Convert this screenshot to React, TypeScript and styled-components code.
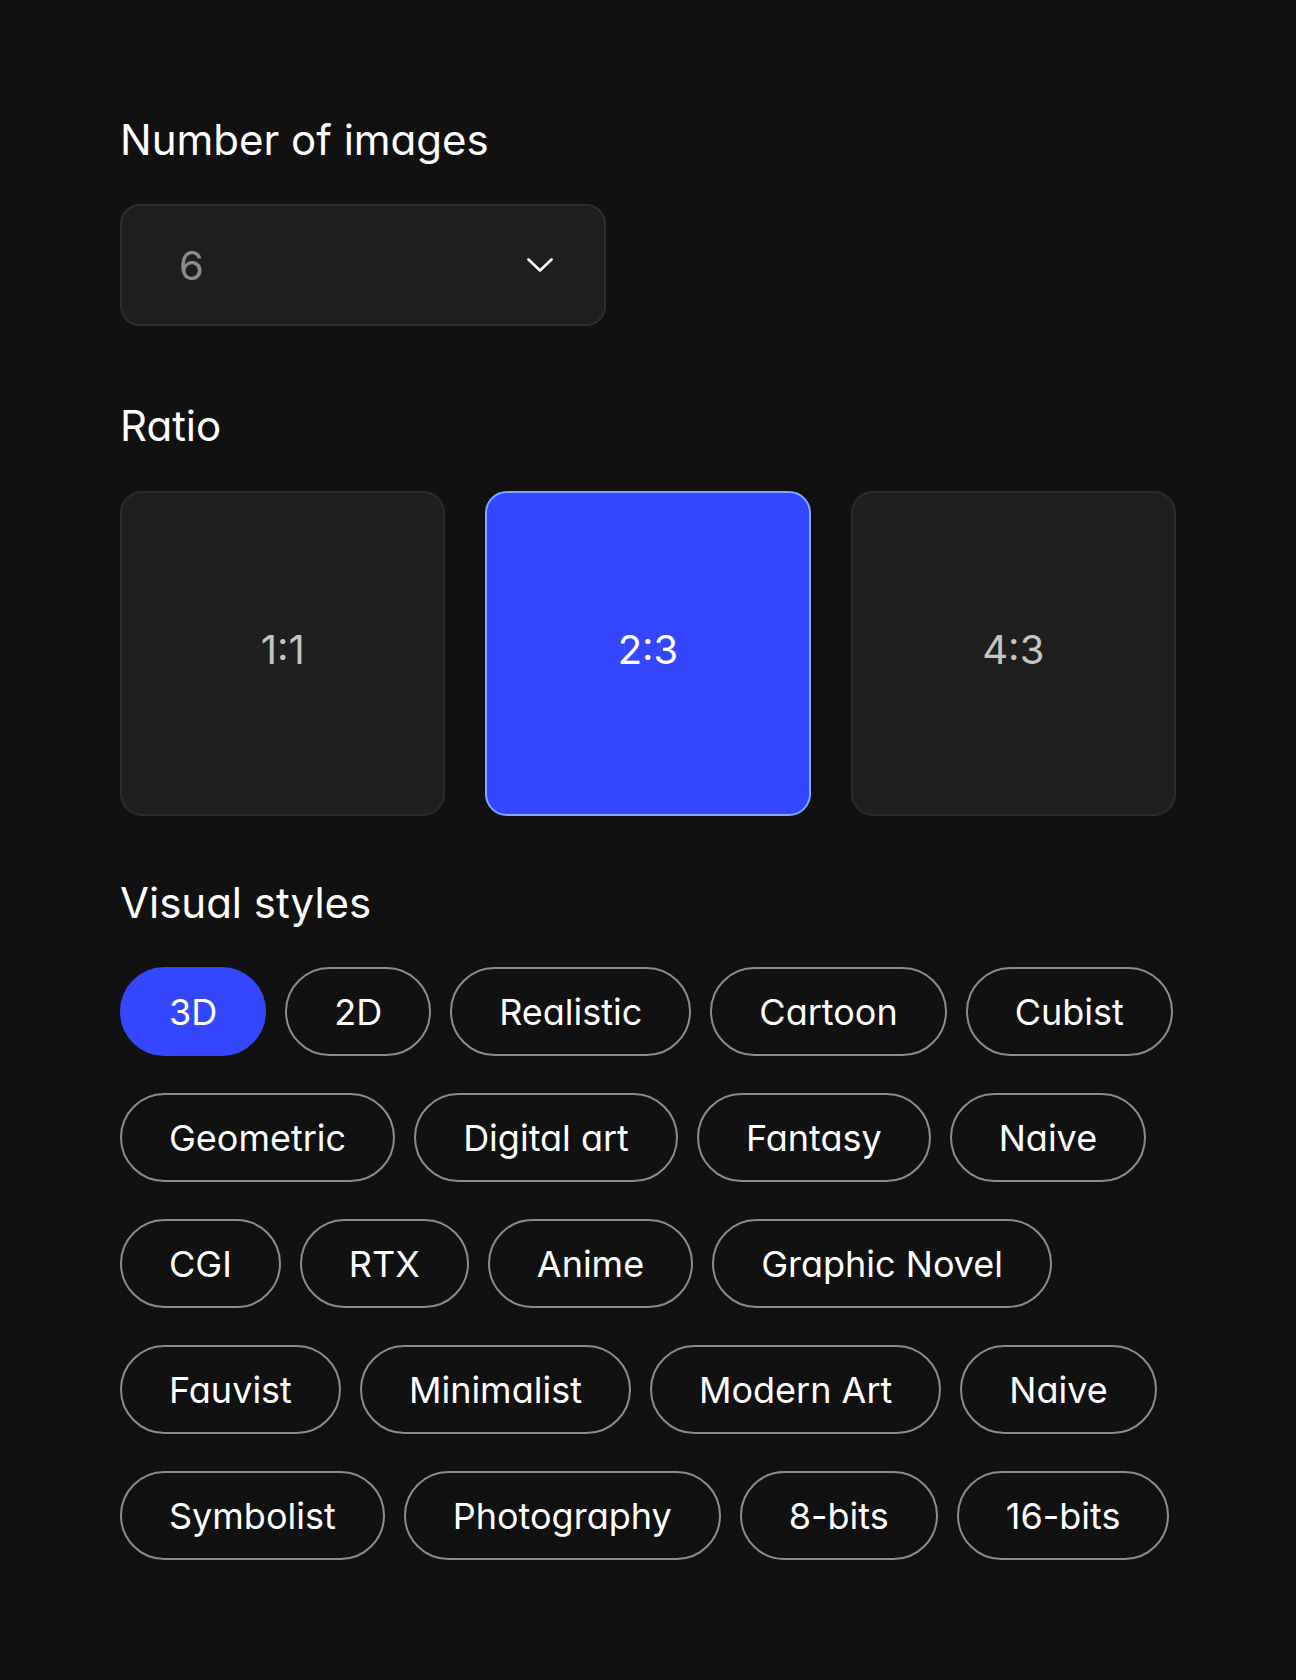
import styled, { createGlobalStyle } from 'styled-components'

const GlobalStyle = createGlobalStyle`
  body {
    margin: 0;
    background-color: #111111;
    font-family: Inter, 'Liberation Sans', sans-serif;
    font-feature-settings: 'cv11';
  }
`

const ratios = ['1:1', '2:3', '4:3']

const styleRows = [
  ['3D', '2D', 'Realistic', 'Cartoon', 'Cubist'],
  ['Geometric', 'Digital art', 'Fantasy', 'Naive'],
  ['CGI', 'RTX', 'Anime', 'Graphic Novel'],
  ['Fauvist', 'Minimalist', 'Modern Art', 'Naive'],
  ['Symbolist', 'Photography', '8-bits', '16-bits'],
]

const ChevronDown = () => (
  <svg width="26" height="15" viewBox="0 0 26 15" fill="none">
    <polyline
      points="1.5,1.5 13,12.5 24.5,1.5"
      stroke="#ffffff"
      strokeWidth="2.6"
      strokeLinecap="round"
      strokeLinejoin="round"
    />
  </svg>
)

const App = () => {
  const selectedRatio = '2:3'
  const selectedStyle = '3D'

  return (
    <>
      <GlobalStyle />
      <Page>
        <Section>
          <Title>Number of images</Title>
          <Select>
            <SelectValue>6</SelectValue>
            <ChevronDown />
          </Select>
        </Section>

        <Section $top={75}>
          <Title>Ratio</Title>
          <RatioGrid>
            {ratios.map((ratio) => (
              <RatioCard key={ratio} $active={ratio === selectedRatio}>
                {ratio}
              </RatioCard>
            ))}
          </RatioGrid>
        </Section>

        <Section $top={62}>
          <Title>Visual styles</Title>
          <ChipList>
            {styleRows.map((row, i) => (
              <ChipRow key={i}>
                {row.map((label) => (
                  <Chip key={label} $active={label === selectedStyle}>
                    {label}
                  </Chip>
                ))}
              </ChipRow>
            ))}
          </ChipList>
        </Section>
      </Page>
    </>
  )
}

export default App

const Page = styled.div`
  display: flex;
  flex-direction: column;
  width: 1056px;
  min-height: 1680px;
  box-sizing: border-box;
  padding: 115px 0 0 120px;
`
const Section = styled.section<{ $top?: number }>`
  display: flex;
  flex-direction: column;
  gap: 39px;
  margin-top: ${({ $top }) => $top ?? 0}px;
`
const Title = styled.h2`
  margin: 0;
  font-size: 42px;
  line-height: 50px;
  font-weight: 400;
  color: #ffffff;
`
const Select = styled.div`
  display: flex;
  align-items: center;
  justify-content: space-between;
  width: 486px;
  height: 122px;
  box-sizing: border-box;
  padding: 0 51px 0 57px;
  border: 2px solid #2e2e2e;
  border-radius: 20px;
  background-color: #1e1e1e;
`
const SelectValue = styled.span`
  font-size: 40px;
  color: #8c8c8c;
`
const RatioGrid = styled.div`
  display: grid;
  grid-template-columns: repeat(3, 1fr);
  gap: 40px;
  width: 1056px;
  margin-top: 1px;
`
const RatioCard = styled.div<{ $active: boolean }>`
  display: flex;
  justify-content: center;
  align-items: center;
  height: 325px;
  box-sizing: border-box;
  padding-bottom: 8px;
  border: 2px solid ${({ $active }) => ($active ? '#7ea8ff' : '#2c2c2c')};
  border-radius: 22px;
  background-color: ${({ $active }) => ($active ? '#3447ff' : '#1f1f1f')};
  color: ${({ $active }) => ($active ? '#ffffff' : '#c4c4c4')};
  font-size: 40px;
`
const ChipList = styled.div`
  display: flex;
  flex-direction: column;
  gap: 37px;
`
const ChipRow = styled.div`
  display: flex;
  gap: 19px;
`
const Chip = styled.button<{ $active: boolean }>`
  height: 89px;
  padding: 0 47px;
  border: 2px solid ${({ $active }) => ($active ? '#3447ff' : '#8c8c8c')};
  border-radius: 45px;
  background-color: ${({ $active }) => ($active ? '#3447ff' : 'transparent')};
  color: #ffffff;
  font-family: inherit;
  font-feature-settings: 'cv11';
  font-size: 36px;
  font-weight: 400;
  white-space: nowrap;
  cursor: pointer;
`
